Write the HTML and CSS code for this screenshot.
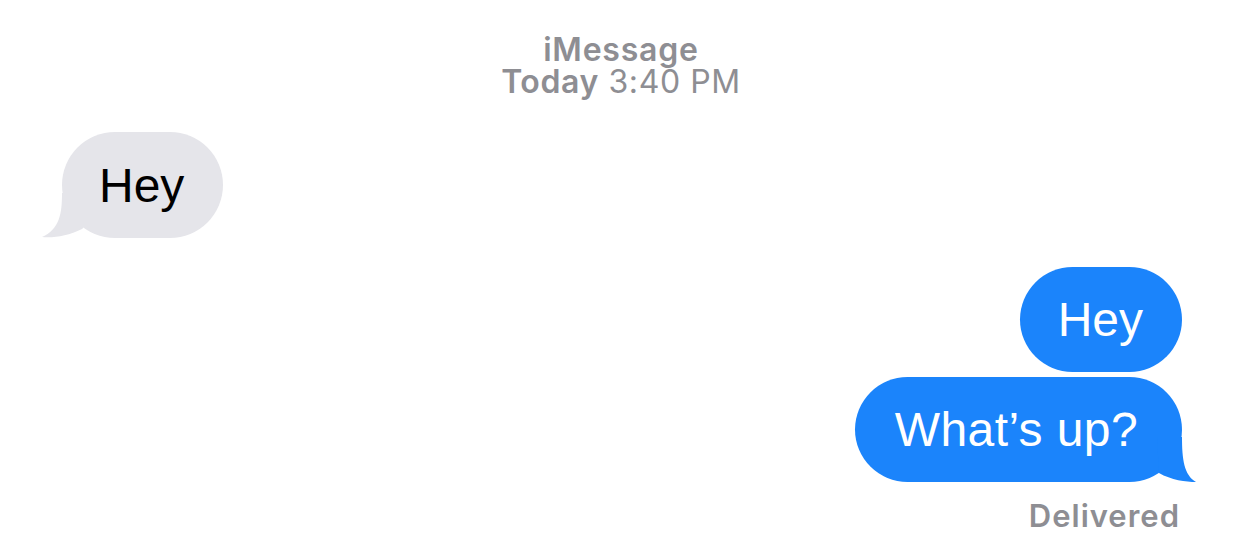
FILE: index.html
```html
<!DOCTYPE html>
<html lang="en">
<head>
<meta charset="utf-8">
<title>iMessage</title>
<link rel="stylesheet" href="styles.css">
</head>
<body>
<main class="thread">
  <header class="meta">
    <div class="meta-service">iMessage</div>
    <div class="meta-time"><span class="meta-day">Today</span> 3:40 PM</div>
  </header>

  <div class="bubble bubble-them">
    <span class="bubble-text">Hey</span>
    <svg class="tail tail-them" viewBox="0 0 46 45" preserveAspectRatio="none" aria-hidden="true">
      <path d="M46 0 L20 0 C20 20 18 36 0 44 C12 45 26 43 40 36 L46 30 Z"/>
    </svg>
  </div>

  <div class="group-me">
    <div class="bubble bubble-me bubble-first">
      <span class="bubble-text">Hey</span>
    </div>
    <div class="bubble bubble-me bubble-second">
      <span class="bubble-text">What’s up?</span>
      <svg class="tail tail-me" viewBox="0 0 40 45" preserveAspectRatio="none" aria-hidden="true">
        <path d="M0 0 L25 0 C25 22 27 38 39 45 C29 45 14 43 2 36 Z"/>
      </svg>
    </div>
    <div class="status">Delivered</div>
  </div>
</main>
</body>
</html>
```

FILE: styles.css
```css
html, body {
  margin: 0;
  padding: 0;
  background: #ffffff;
}

body {
  width: 1242px;
  height: 551px;
  overflow: hidden;
  font-family: "Liberation Sans", Arial, sans-serif;
}

.thread {
  display: flex;
  flex-direction: column;
  padding-top: 34px;
}

.meta {
  text-align: center;
  color: #8e8e93;
  font-family: Inter, "Liberation Sans", sans-serif;
  font-size: 32px;
  line-height: 32px;
}

.meta-service {
  font-weight: 600;
  letter-spacing: 0.8px;
}

.meta-time {
  font-weight: 400;
  letter-spacing: 0.6px;
}

.meta-day {
  font-weight: 600;
}

.bubble {
  position: relative;
  display: flex;
  align-items: center;
  height: 105px;
  padding: 0 37px;
  border-radius: 53px;
  font-size: 48px;
  line-height: 105px;
  box-sizing: border-box;
}

.bubble-text {
  position: relative;
  z-index: 1;
  white-space: nowrap;
}

.bubble-them {
  align-self: flex-start;
  margin-top: 34px;
  margin-left: 62px;
  height: 106px;
  padding: 0 39px 0 37px;
  background: #e5e5ea;
  color: #000000;
}

.group-me {
  display: flex;
  flex-direction: column;
  align-items: flex-end;
  margin-top: 29px;
  margin-right: 60px;
  gap: 5px;
}

.bubble-me {
  background: #1b84fb;
  color: #ffffff;
}

.bubble-first {
  padding: 0 39px 0 38px;
}

.bubble-second {
  padding: 0 44px 0 40px;
  letter-spacing: 0.4px;
}

.tail {
  position: absolute;
  bottom: 0;
  height: 45px;
  z-index: 0;
}

.tail-me {
  right: -15px;
  width: 40px;
  fill: #1b84fb;
}

.tail-them {
  left: -20px;
  width: 46px;
  fill: #e5e5ea;
}

.status {
  margin-top: 14px;
  margin-right: 2px;
  color: #8e8e93;
  font-family: Inter, "Liberation Sans", sans-serif;
  font-weight: 600;
  font-size: 31px;
  line-height: 30px;
  letter-spacing: 1px;
}
```
